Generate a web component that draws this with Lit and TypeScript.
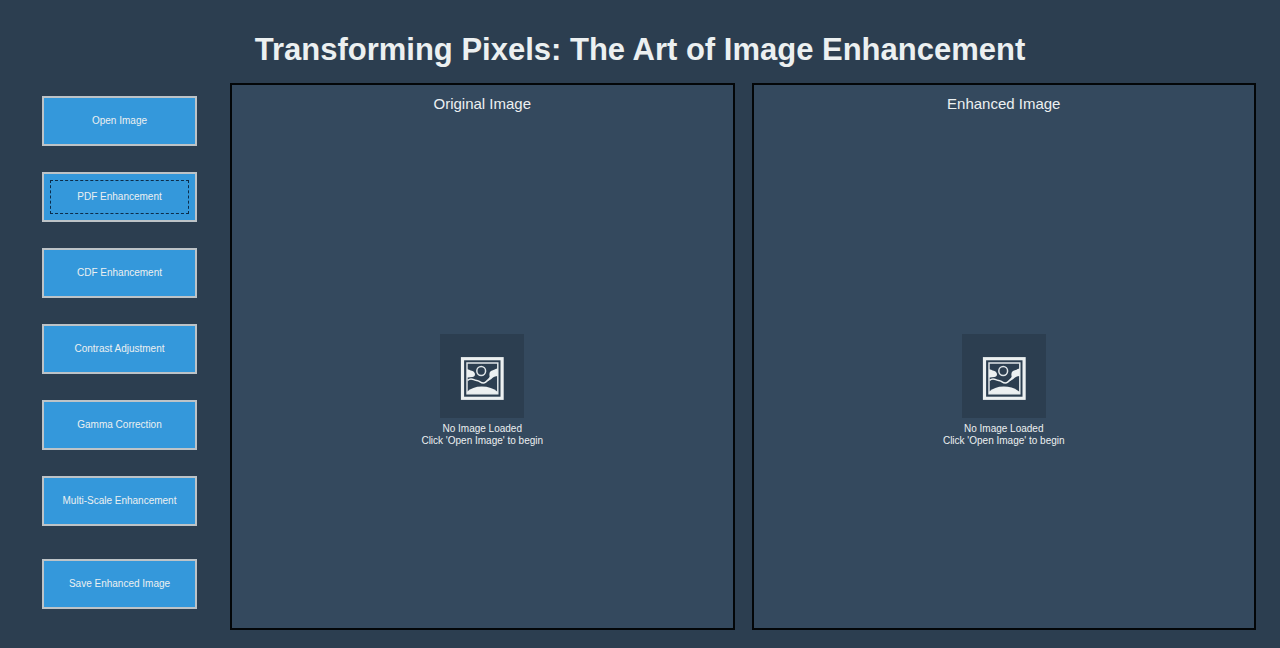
import { LitElement, html, css } from "lit";
import { customElement, property, state } from "lit/decorators.js";
import { classMap } from "lit/directives/class-map.js";

@customElement("image-panel")
class ImagePanel extends LitElement {
  @property() heading = "";

  static styles = css`
    :host {
      display: flex;
      flex-direction: column;
      box-sizing: border-box;
      min-width: 0;
      border: 2px solid #030608;
      background: #34495e;
      color: #ecf0f1;
      padding-top: 10px;
    }
    .heading {
      margin: 0;
      font-size: 15px;
      line-height: 18px;
      font-weight: 400;
      text-align: center;
    }
    .empty {
      flex: 1;
      display: flex;
      flex-direction: column;
      align-items: center;
      justify-content: center;
      padding-top: 39px;
      font-size: 10px;
      line-height: 12px;
      text-align: center;
    }
    .icon {
      display: block;
      width: 84px;
      height: 84px;
      margin-bottom: 5px;
    }
    .text {
      margin: 0;
    }
  `;

  render() {
    return html`
      <h2 class="heading">${this.heading}</h2>
      <div class="empty">
        <svg class="icon" viewBox="0 0 84 84" aria-hidden="true">
          <rect width="84" height="84" fill="#2c3e50" />
          <rect x="22.5" y="24.7" width="39.6" height="39.6" fill="none" stroke="#ecf0f1" stroke-width="3.2" />
          <rect x="27" y="29" width="30.8" height="30.8" fill="none" stroke="#dfe5e8" stroke-width="1.5" />
          <circle cx="41.2" cy="37" r="4.4" fill="none" stroke="#dfe5e8" stroke-width="1.5" />
          <path d="M27 35.2c2 0 2.800.8 3.800 1.300 2.500.5 4.200 1.900 4.200 3.700 0 1.700-1.200 2.700-2.700 2.900-1.900.3-3.200.5-5.300.4z" fill="#ecf0f1" />
          <path d="M57.800 34.600c-2.300.1-3.200 1.300-4.900 1.700-2.200.6-3.300 1.800-3.500 3.600-.2 1.800.8 2.800-.4 4.500-1 1.400-2 2-3 3.100 3.100-.4 4.900-2.300 6.700-3.800 1.500-1.200 3.200-1.600 5.100-1.800z" fill="#ecf0f1" />
          <path d="M27.500 46.300c2.200-1.800 4.300-1.700 6.300-.6 2.200 1.200 3.600.5 5.500 1.700 1.900 1.200 3.800 2.600 6 1 2.200-1.600 3.600-3.900 6-5.600" fill="none" stroke="#ecf0f1" stroke-width="1.500" />
          <path d="M27 59.800v-2c3.500-3.200 8.500-5.200 14.800-5.200s12 2 16 5.400v1.800z" fill="#ecf0f1" />
        </svg>
        <p class="text">No Image Loaded</p>
        <p class="text">Click 'Open Image' to begin</p>
      </div>
    `;
  }
}

@customElement("app-root")
class AppRoot extends LitElement {
  @state() current = "PDF Enhancement";

  private actions = [
    "Open Image",
    "PDF Enhancement",
    "CDF Enhancement",
    "Contrast Adjustment",
    "Gamma Correction",
    "Multi-Scale Enhancement",
    "Save Enhanced Image",
  ];

  static styles = css`
    :host {
      display: flex;
      flex-direction: column;
      box-sizing: border-box;
      min-height: 100vh;
      padding: 30px 0 18px;
      background: #2c3e50;
      color: #ecf0f1;
      font-family: "Liberation Sans", Arial, sans-serif;
    }
    .title {
      margin: 0;
      padding-bottom: 13px;
      font-size: 31px;
      line-height: 40px;
      font-weight: 700;
      text-align: center;
    }
    .layout {
      flex: 1;
      display: grid;
      grid-template-columns: 155px 1fr;
      column-gap: 33px;
      padding: 0 24px 0 42px;
    }
    .actions {
      display: flex;
      flex-direction: column;
      gap: 26px;
      padding-top: 13px;
    }
    .action {
      box-sizing: border-box;
      width: 100%;
      height: 50px;
      padding: 0;
      border: 2px solid #bdc3c7;
      border-radius: 0;
      background: #3498db;
      color: #ecf0f1;
      font-family: inherit;
      font-size: 10px;
      line-height: 14px;
    }
    .current {
      outline: 1px dashed #0b2c4a;
      outline-offset: -9px;
    }
    .save {
      margin-top: 7px;
    }
    .panels {
      display: grid;
      grid-template-columns: 1fr 1fr;
      gap: 17px;
    }
  `;

  render() {
    return html`
      <h1 class="title">Transforming Pixels: The Art of Image Enhancement</h1>
      <main class="layout">
        <nav class="actions">
          ${this.actions.map(
            (label) => html`
              <button
                type="button"
                class=${classMap({
                  action: true,
                  current: label === this.current,
                  save: label.startsWith("Save"),
                })}
                @click=${() => (this.current = label)}
              >
                ${label}
              </button>
            `
          )}
        </nav>
        <div class="panels">
          <image-panel heading="Original Image"></image-panel>
          <image-panel heading="Enhanced Image"></image-panel>
        </div>
      </main>
    `;
  }
}
